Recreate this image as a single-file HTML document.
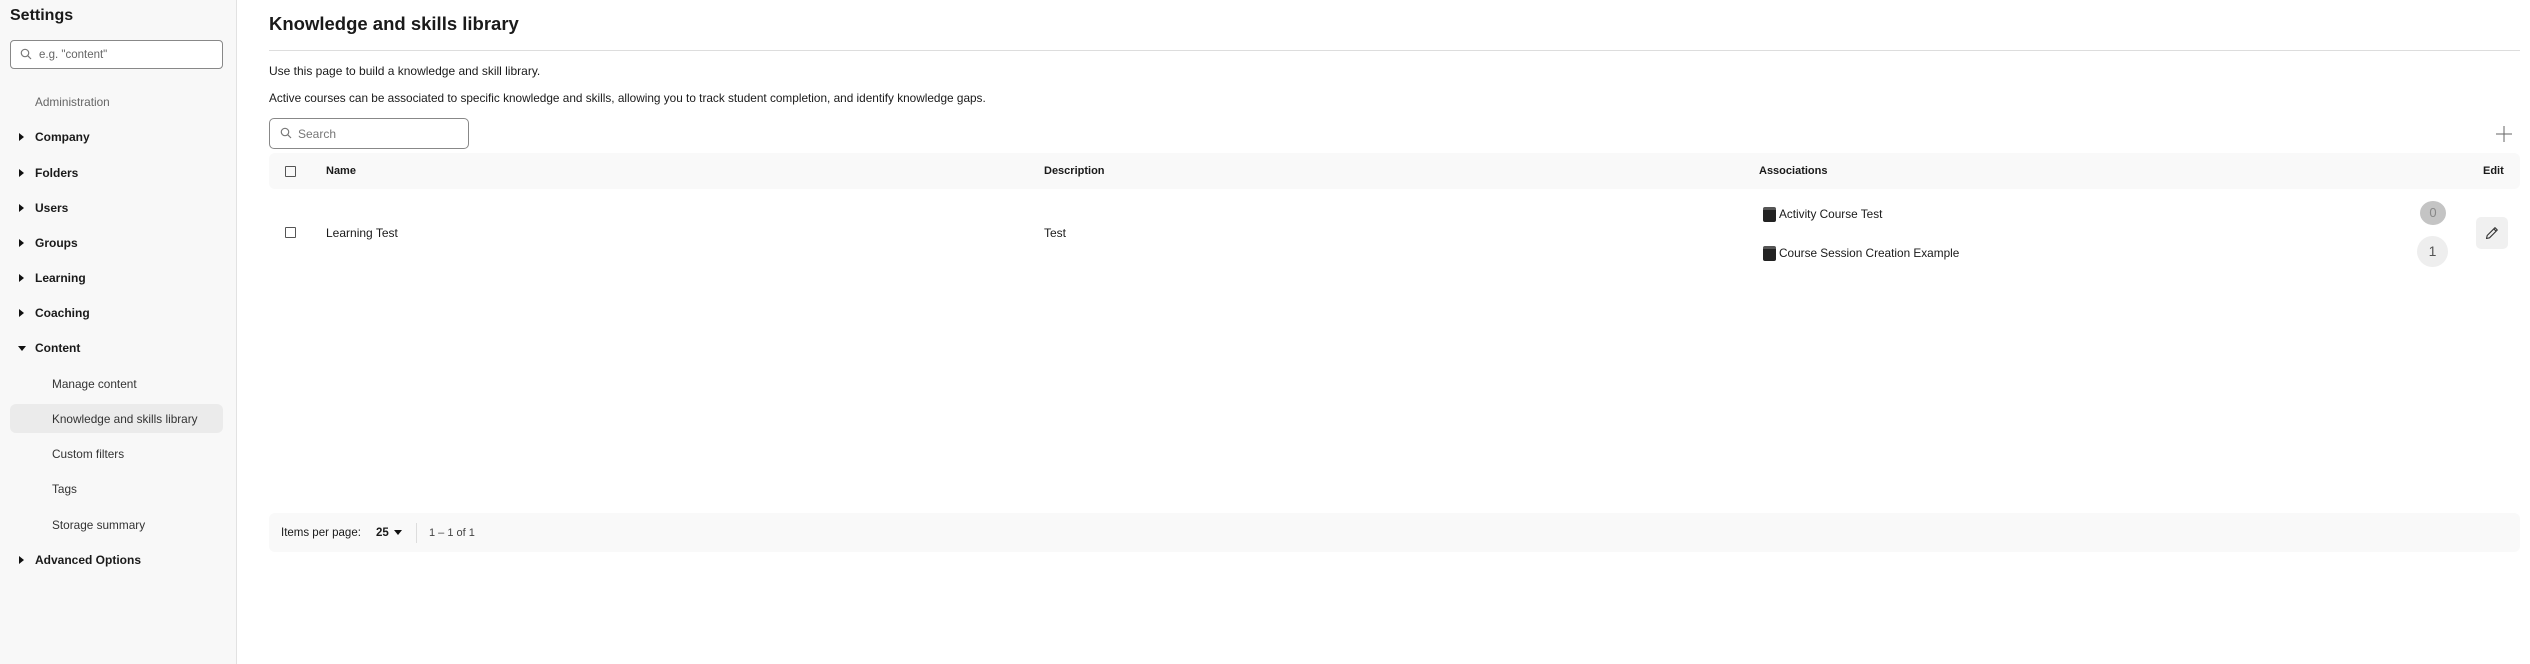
<!DOCTYPE html>
<html><head><meta charset="utf-8"><style>
*{margin:0;padding:0;box-sizing:border-box}
body{width:2530px;height:664px;background:#fff;font-family:"Liberation Sans",Arial,sans-serif;color:#1a1a1a;position:relative;overflow:hidden}
.a{position:absolute;white-space:nowrap}
.side{position:absolute;left:0;top:0;width:237px;height:664px;background:#f8f8f8;border-right:1px solid #e2e2e2}
.nav{position:absolute;left:35px;font-size:12px;font-weight:bold;transform:translateY(-50%)}
.sub{position:absolute;left:52px;font-size:11.8px;color:#333;transform:translateY(-50%)}
.tri{position:absolute;left:19px;width:0;height:0;border-top:4px solid transparent;border-bottom:4px solid transparent;border-left:5px solid #111;transform:translateY(-50%)}
.mid{transform:translateY(-50%)}
.cb{position:absolute;width:11px;height:11px;border:1.3px solid #555;border-radius:1px}
</style></head><body>
<div class="side">
 <div class="a mid" style="left:10px;top:16px;font-size:16px;font-weight:bold">Settings</div>
 <div class="a" style="left:10px;top:40px;width:213px;height:29px;border:1px solid #888;border-radius:4px;background:#fff"></div>
 <svg class="a" style="left:20px;top:48px" width="12" height="12" viewBox="0 0 12 12"><circle cx="5" cy="5" r="3.7" fill="none" stroke="#777" stroke-width="1.2"/><line x1="7.7" y1="7.7" x2="11" y2="11" stroke="#777" stroke-width="1.2"/></svg>
 <div class="a mid" style="left:39px;top:55px;font-size:11.5px;color:#666">e.g. "content"</div>
 <div class="a mid" style="left:35px;top:102px;font-size:11.8px;color:#666">Administration</div>
 <div class="tri" style="top:137px"></div><div class="nav" style="top:137px">Company</div>
 <div class="tri" style="top:173px"></div><div class="nav" style="top:173px">Folders</div>
 <div class="tri" style="top:208px"></div><div class="nav" style="top:208px">Users</div>
 <div class="tri" style="top:243px"></div><div class="nav" style="top:243px">Groups</div>
 <div class="tri" style="top:278px"></div><div class="nav" style="top:278px">Learning</div>
 <div class="tri" style="top:313px"></div><div class="nav" style="top:313px">Coaching</div>
 <div class="a" style="left:18px;top:346px;border-left:4px solid transparent;border-right:4px solid transparent;border-top:5px solid #111"></div><div class="nav" style="top:348px">Content</div>
 <div class="sub" style="top:384px">Manage content</div>
 <div class="a" style="left:10px;top:404px;width:213px;height:29px;background:#ebebeb;border-radius:6px"></div>
 <div class="sub" style="top:419px">Knowledge and skills library</div>
 <div class="sub" style="top:454px">Custom filters</div>
 <div class="sub" style="top:489px">Tags</div>
 <div class="sub" style="top:525px">Storage summary</div>
 <div class="tri" style="top:560px"></div><div class="nav" style="top:560px">Advanced Options</div>
</div>

<div class="a mid" style="left:269px;top:24px;font-size:18.5px;font-weight:bold">Knowledge and skills library</div>
<div class="a" style="left:269px;top:50px;width:2251px;height:1px;background:#ddd"></div>
<div class="a mid" style="left:269px;top:71px;font-size:12px">Use this page to build a knowledge and skill library.</div>
<div class="a mid" style="left:269px;top:98px;font-size:11.8px">Active courses can be associated to specific knowledge and skills, allowing you to track student completion, and identify knowledge gaps.</div>
<div class="a" style="left:269px;top:118px;width:200px;height:31px;border:1px solid #888;border-radius:5px"></div>
<svg class="a" style="left:280px;top:127px" width="12" height="12" viewBox="0 0 12 12"><circle cx="5" cy="5" r="3.7" fill="none" stroke="#777" stroke-width="1.2"/><line x1="7.7" y1="7.7" x2="11" y2="11" stroke="#777" stroke-width="1.2"/></svg>
<div class="a mid" style="left:298px;top:134px;font-size:12px;color:#777">Search</div>
<svg class="a" style="left:2496px;top:126px" width="16" height="16" viewBox="0 0 16 16"><path d="M8 0V16M0 8H16" stroke="#666" stroke-width="1"/></svg>

<div class="a" style="left:269px;top:153px;width:2251px;height:36px;background:#f9f9f9;border-radius:6px"></div>
<div class="cb" style="left:285px;top:166px"></div>
<div class="a mid" style="left:326px;top:171px;font-size:11px;font-weight:bold">Name</div>
<div class="a mid" style="left:1044px;top:171px;font-size:11px;font-weight:bold">Description</div>
<div class="a mid" style="left:1759px;top:171px;font-size:11px;font-weight:bold">Associations</div>
<div class="a mid" style="left:2483px;top:171px;font-size:11px;font-weight:bold">Edit</div>

<div class="cb" style="left:285px;top:227px"></div>
<div class="a mid" style="left:326px;top:233px;font-size:12px">Learning Test</div>
<div class="a mid" style="left:1044px;top:233px;font-size:12px">Test</div>
<div class="a" style="left:1763px;top:207px;width:13px;height:15px;background:#222;border-radius:2px;border-top:3px solid #555"></div>
<div class="a mid" style="left:1779px;top:214px;font-size:11.8px">Activity Course Test</div>
<div class="a" style="left:1763px;top:246px;width:13px;height:15px;background:#222;border-radius:2px;border-top:3px solid #555"></div>
<div class="a mid" style="left:1779px;top:253px;font-size:11.8px">Course Session Creation Example</div>
<div class="a" style="left:2420px;top:201px;width:26px;height:24px;border-radius:50%;background:#c4c4c4;color:#888;font-size:13px;text-align:center;line-height:24px">0</div>
<div class="a" style="left:2417px;top:236px;width:31px;height:31px;border-radius:50%;background:#eeeeee;color:#555;font-size:14px;text-align:center;line-height:31px">1</div>
<div class="a" style="left:2476px;top:217px;width:32px;height:32px;border-radius:5px;background:#f0f0f0"></div>
<svg class="a" style="left:2485px;top:226px" width="14" height="14" viewBox="0 0 14 14"><path d="M1.5 12.5L2.2 9.5L10 1.7L12.3 4L4.5 11.8Z M8.8 2.9L11.1 5.2" fill="none" stroke="#333" stroke-width="1.1" stroke-linejoin="round"/></svg>

<div class="a" style="left:269px;top:513px;width:2251px;height:39px;background:#f9f9f9;border-radius:6px"></div>
<div class="a mid" style="left:281px;top:533px;font-size:11.5px">Items per page:</div>
<div class="a mid" style="left:376px;top:533px;font-size:11.5px;font-weight:bold">25</div>
<div class="a" style="left:394px;top:530px;border-left:4px solid transparent;border-right:4px solid transparent;border-top:5px solid #111"></div>
<div class="a" style="left:416px;top:523px;width:1px;height:20px;background:#ddd"></div>
<div class="a mid" style="left:429px;top:533px;font-size:11px;color:#444">1 – 1 of 1</div>
</body></html>
